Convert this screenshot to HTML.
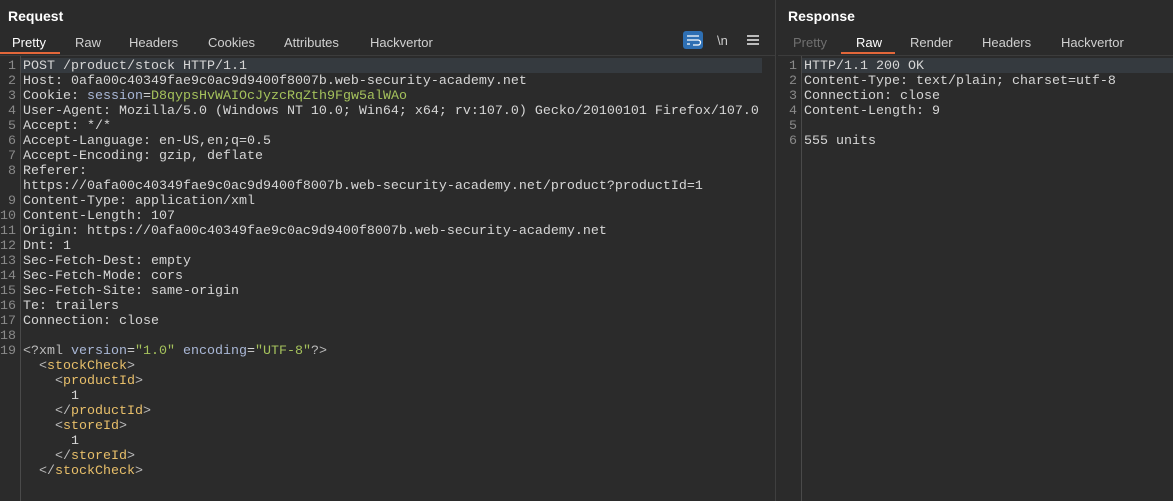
<html><head><style>
body{margin:0;width:1173px;height:501px;background:#2b2b2b;overflow:hidden;font-family:"Liberation Sans",sans-serif;position:relative}
.t{position:absolute;color:#fff;font-weight:bold;font-size:14px;top:8px}
.tab{position:absolute;top:35px;font-size:13px;color:#d0d0d0}
.ul{position:absolute;top:52px;height:2px;background:#e3673a}
.hl{position:absolute;left:0;right:0;top:55px;height:1px;background:#3c3c3c}
.code{position:absolute;font-family:"Liberation Mono",monospace;font-size:13.33px;line-height:15px;color:#d6d6d6;white-space:pre}
.ln{position:absolute;font-family:"Liberation Mono",monospace;font-size:13.33px;line-height:15px;color:#8a8a8a;white-space:pre;text-align:right}
.k{color:#a9b7d6}.g{color:#a5c25c}.o{color:#e8bf6a}.b{color:#bbbbbb}
</style></head><body>
<div style="position:absolute;left:775px;top:0;width:1px;height:501px;background:#3f3f3f"></div>
<div class="hl" style="right:398px"></div><div class="hl" style="left:778px"></div>
<div class="t" style="left:8px">Request</div>
<div class="t" style="left:788px">Response</div>
<div class="tab" style="left:12px;color:#fff">Pretty</div>
<div class="tab" style="left:75px">Raw</div>
<div class="tab" style="left:129px">Headers</div>
<div class="tab" style="left:208px">Cookies</div>
<div class="tab" style="left:284px">Attributes</div>
<div class="tab" style="left:370px">Hackvertor</div>
<div class="ul" style="left:0;width:60px"></div>
<div class="tab" style="left:793px;color:#707070">Pretty</div>
<div class="tab" style="left:856px;color:#fff">Raw</div>
<div class="tab" style="left:910px">Render</div>
<div class="tab" style="left:982px">Headers</div>
<div class="tab" style="left:1061px">Hackvertor</div>
<div class="ul" style="left:841px;width:54px"></div>
<div style="position:absolute;left:683px;top:31px;width:20px;height:18px;background:#2e6fb3;border-radius:3px"></div>
<svg style="position:absolute;left:683px;top:31px" width="20" height="18"><path d="M4 5h12M4 9h11a2.5 2.5 0 0 1 0 5h-5M4 13h3" stroke="#fff" stroke-width="1.3" fill="none"/></svg>
<div class="tab" style="left:717px;color:#ccc;top:33px">\n</div>
<svg style="position:absolute;left:747px;top:34px" width="12" height="12"><path d="M0 2h12M0 6h12M0 10h12" stroke="#bbb" stroke-width="2"/></svg>
<div style="position:absolute;left:20px;top:56px;width:1px;height:445px;background:#4a4a4a"></div>
<div style="position:absolute;left:801px;top:56px;width:1px;height:445px;background:#4a4a4a"></div>
<div style="position:absolute;left:21px;top:58px;width:741px;height:15px;background:#353a3f"></div>
<div style="position:absolute;left:802px;top:58px;width:371px;height:15px;background:#353a3f"></div>
<div class="ln" style="left:0;top:59px;width:16px">1
2
3
4
5
6
7
8

9
10
11
12
13
14
15
16
17
18
19</div>
<div class="code" style="left:23px;top:59px">POST /product/stock HTTP/1.1
Host: 0afa00c40349fae9c0ac9d9400f8007b.web-security-academy.net
Cookie: <span class="k">session</span>=<span class="g">D8qypsHvWAIOcJyzcRqZth9Fgw5alWAo</span>
User-Agent: Mozilla/5.0 (Windows NT 10.0; Win64; x64; rv:107.0) Gecko/20100101 Firefox/107.0
Accept: */*
Accept-Language: en-US,en;q=0.5
Accept-Encoding: gzip, deflate
Referer:
https://0afa00c40349fae9c0ac9d9400f8007b.web-security-academy.net/product?productId=1
Content-Type: application/xml
Content-Length: 107
Origin: https://0afa00c40349fae9c0ac9d9400f8007b.web-security-academy.net
Dnt: 1
Sec-Fetch-Dest: empty
Sec-Fetch-Mode: cors
Sec-Fetch-Site: same-origin
Te: trailers
Connection: close

<span class="b">&lt;?xml</span> <span class="k">version</span>=<span class="g">"1.0"</span> <span class="k">encoding</span>=<span class="g">"UTF-8"</span><span class="b">?&gt;</span>
  <span class="b">&lt;</span><span class="o">stockCheck</span><span class="b">&gt;</span>
    <span class="b">&lt;</span><span class="o">productId</span><span class="b">&gt;</span>
      1
    <span class="b">&lt;/</span><span class="o">productId</span><span class="b">&gt;</span>
    <span class="b">&lt;</span><span class="o">storeId</span><span class="b">&gt;</span>
      1
    <span class="b">&lt;/</span><span class="o">storeId</span><span class="b">&gt;</span>
  <span class="b">&lt;/</span><span class="o">stockCheck</span><span class="b">&gt;</span></div>
<div class="ln" style="left:780px;top:59px;width:17px">1
2
3
4
5
6</div>
<div class="code" style="left:804px;top:59px">HTTP/1.1 200 OK
Content-Type: text/plain; charset=utf-8
Connection: close
Content-Length: 9

555 units</div>
</body></html>
